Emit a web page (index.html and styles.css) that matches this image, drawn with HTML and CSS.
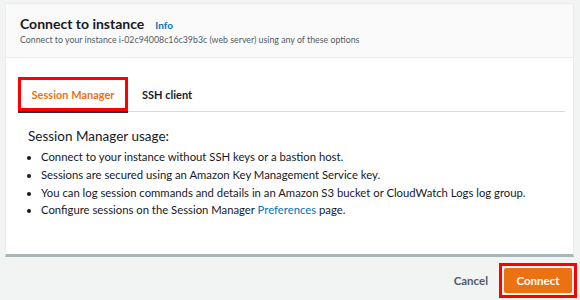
FILE: index.html
```html
<!DOCTYPE html>
<html>
<head>
<meta charset="utf-8">
<link rel="stylesheet" href="styles.css">
</head>
<body>
<div class="card">
  <div class="header">
    <div class="title-row"><span class="title">Connect to instance</span><a class="info">Info</a></div>
    <div class="subtitle">Connect to your instance i-02c94008c16c39b3c (web server) using any of these options</div>
  </div>
  <div class="body">
    <div class="tabs">
      <div class="tab active"><span>Session Manager</span></div>
      <div class="tab"><span>SSH client</span></div>
    </div>
    <div class="content">
      <h2 class="usage">Session Manager usage:</h2>
      <ul class="list">
        <li>Connect to your instance without SSH keys or a bastion host.</li>
        <li>Sessions are secured using an Amazon Key Management Service key.</li>
        <li>You can log session commands and details in an Amazon S3 bucket or CloudWatch Logs log group.</li>
        <li>Configure sessions on the Session Manager <a class="link">Preferences</a> page.</li>
      </ul>
    </div>
  </div>
</div>
<div class="footer">
  <span class="cancel">Cancel</span>
  <div class="hl"><span class="connect">Connect</span></div>
</div>
</body>
</html>
```
FILE: styles.css
```css
html, body { margin: 0; padding: 0; }
body {
  background: #f2f3f3;
  font-family: "Lato", "Noto Sans", sans-serif;
  color: #16191f;
  width: 580px;
  height: 300px;
  overflow: hidden;
}
.card {
  margin: 3px 6px 0 5px;
  background: #fff;
  border: 1px solid #eaeded;
  border-bottom: 3px solid #aab7b8;
  height: 254px;
  box-sizing: border-box;
  display: flex;
  flex-direction: column;
}
.header {
  background: #fafafa;
  border-bottom: 1px solid #eaeded;
  padding: 11px 14px 0 14px;
  height: 54px;
  box-sizing: border-box;
}
.title-row { display: flex; align-items: baseline; }
.title { font-size: 14px; font-weight: 700; }
.info { color: #0073bb; font-size: 10px; font-weight: 700; margin-left: 11px; }
.subtitle { font-size: 8.8px; color: #545b64; margin-top: 2px; white-space: nowrap; }
.body { padding: 19px 8px 0 12px; }
.tabs { display: flex; border-bottom: 1px solid #d5dbdb; }
.tab {
  padding: 0 14px;
  height: 34px;
  display: flex;
  align-items: center;
  font-size: 11px;
  font-weight: 700;
  color: #16191f;
  box-sizing: border-box;
  white-space: nowrap;
}
.tab.active {
  color: #ec7211;
  border: 3px solid #f00;
  width: 110px;
  justify-content: center;
  box-shadow: 0 2px 0 #232f3e;
}
.content { padding: 16px 0 0 10px; }
.usage { font-size: 13.5px; font-weight: 400; margin: 0 0 4px 0; }
.list { margin: 0; padding-left: 13px; font-size: 11.3px; }
.list li { line-height: 17.8px; }
.link { color: #0073bb; }
.footer {
  display: flex;
  justify-content: flex-end;
  align-items: center;
  padding: 6px 3px 0 0;
}
.cancel { font-size: 11.5px; font-weight: 700; color: #545b64; margin-right: 11px; }
.hl { border: 3px solid #f00; padding: 2px; }
.connect {
  display: block;
  background: #ec7211;
  color: #fff;
  font-size: 11.5px;
  font-weight: 700;
  width: 68px;
  height: 25px;
  line-height: 25px;
  text-align: center;
  border-radius: 2px;
}
```
